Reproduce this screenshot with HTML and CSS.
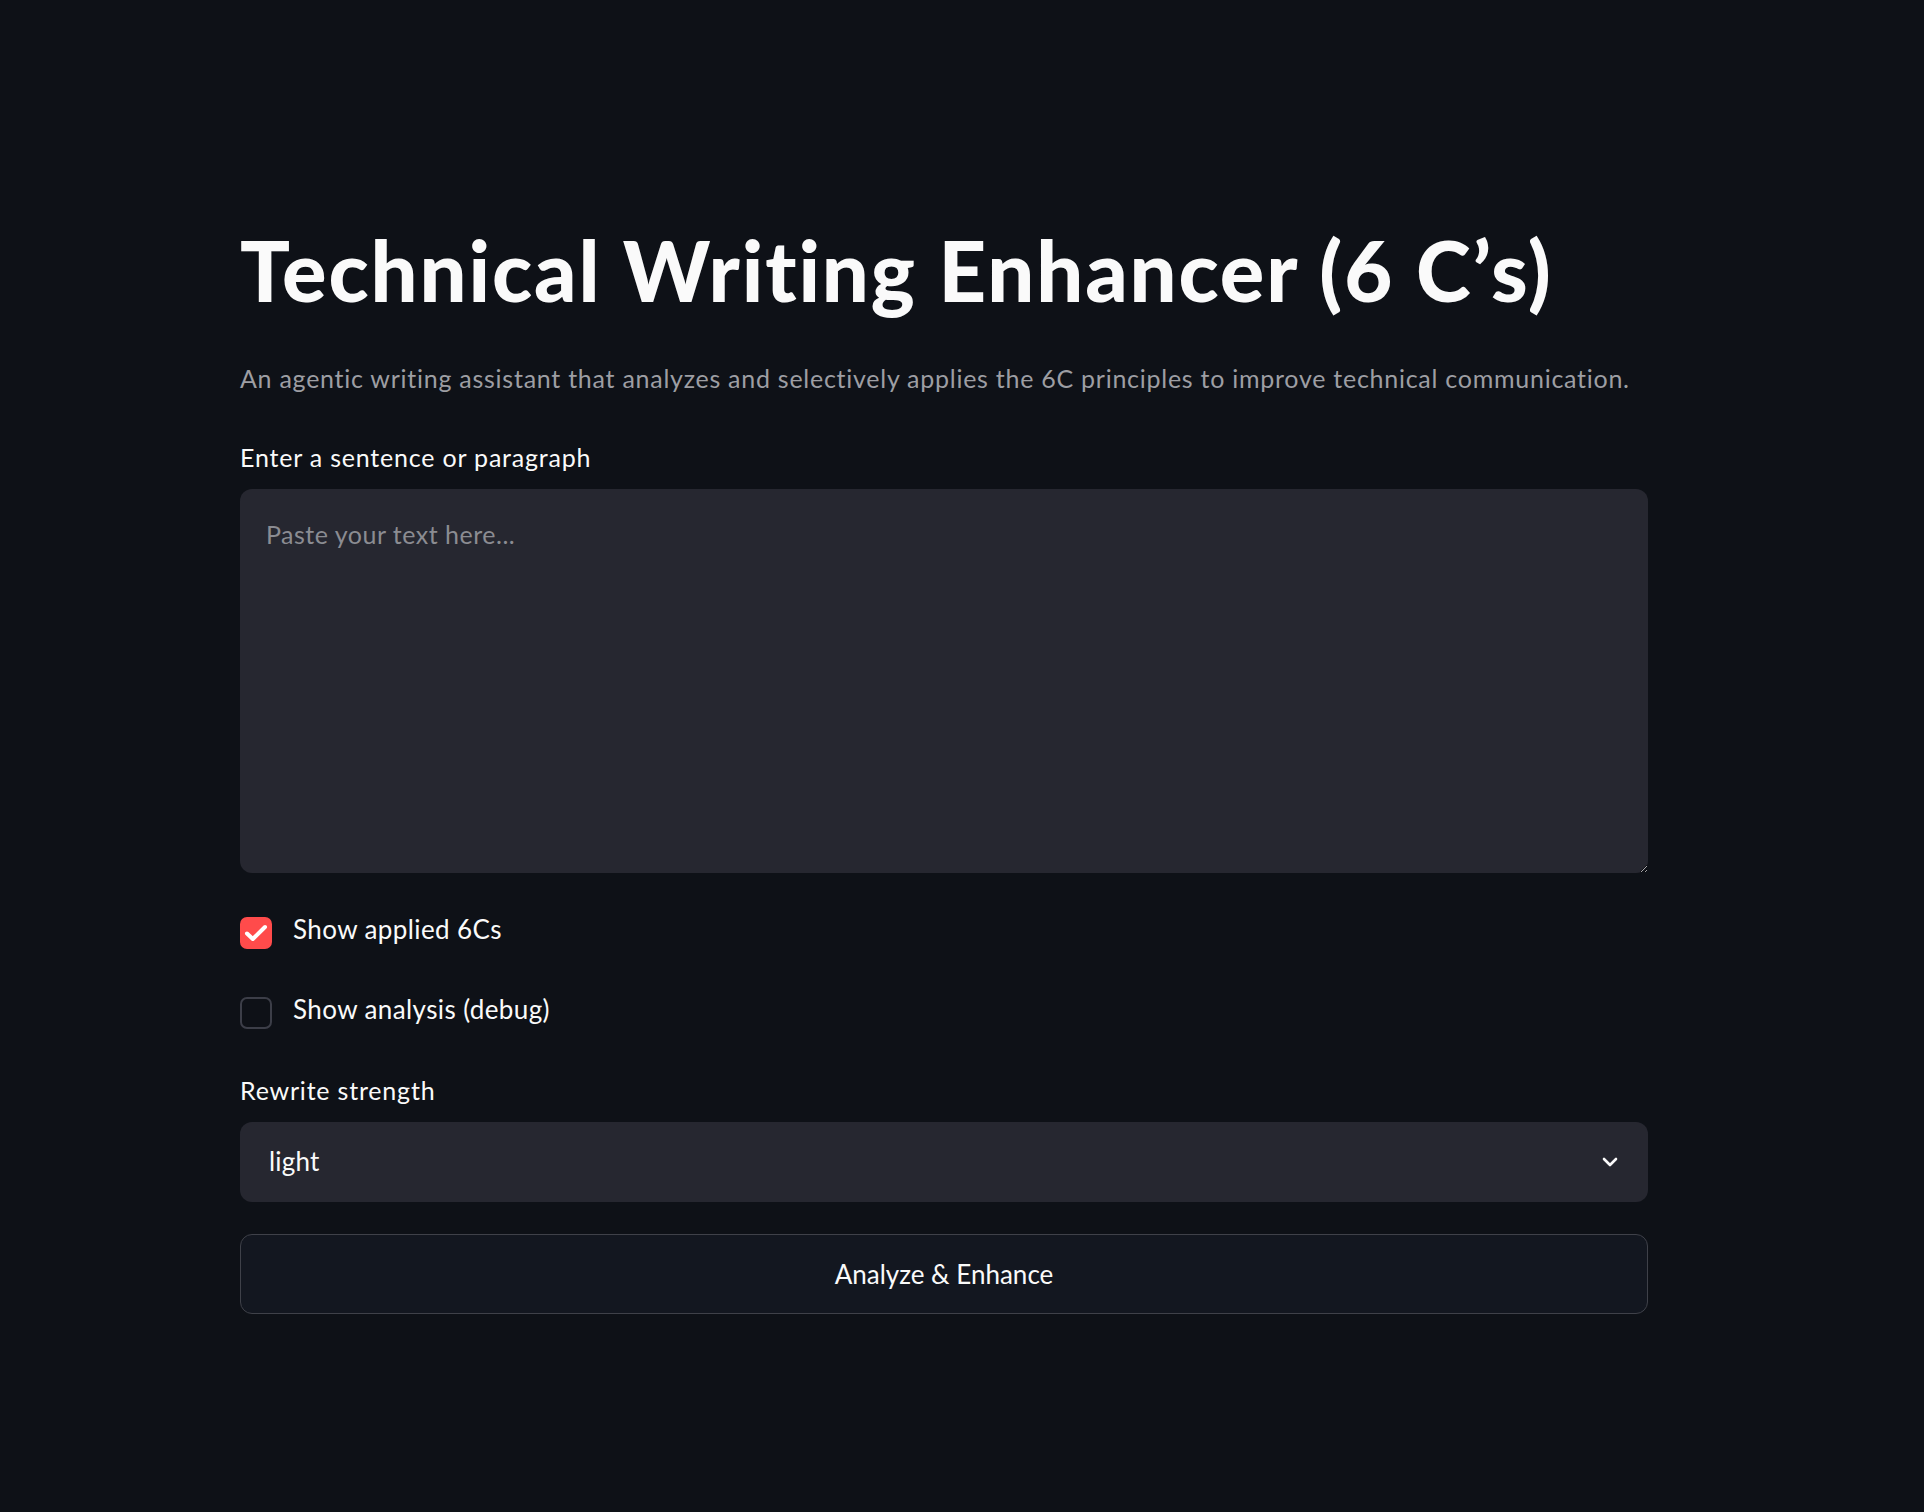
FILE: index.html
```html
<!DOCTYPE html>
<html lang="en">
<head>
<meta charset="utf-8">
<title>Technical Writing Enhancer</title>
<link rel="stylesheet" href="styles.css">
</head>
<body>
<main class="main">
  <h1 class="title">Technical Writing Enhancer (6 C’s)</h1>
  <p class="caption">An agentic writing assistant that analyzes and selectively applies the 6C principles to improve technical communication.</p>

  <label class="field-label" for="txt">Enter a sentence or paragraph</label>
  <textarea id="txt" class="textarea" placeholder="Paste your text here..."></textarea>

  <div class="checks">
    <div class="check-row">
      <span class="box checked">
        <svg width="32" height="32" viewBox="0 0 32 32"><polyline points="7,16.5 12.8,22 25,10" fill="none" stroke="#fff" stroke-width="4" stroke-linecap="round" stroke-linejoin="round"/></svg>
      </span>
      <span class="check-label">Show applied 6Cs</span>
    </div>
    <div class="check-row">
      <span class="box"></span>
      <span class="check-label">Show analysis (debug)</span>
    </div>
  </div>

  <div class="field-label">Rewrite strength</div>
  <div class="select">
    <span class="select-value">light</span>
    <svg class="chev" width="18" height="12" viewBox="0 0 18 12"><polyline points="3,3 9,9 15,3" fill="none" stroke="#fafafa" stroke-width="2.6" stroke-linecap="round" stroke-linejoin="round"/></svg>
  </div>

  <button class="btn">Analyze &amp; Enhance</button>
</main>
</body>
</html>
```

FILE: styles.css
```css
html, body {
  margin: 0;
  padding: 0;
  background: #0e1117;
  color-scheme: dark;
}

body {
  font-family: Lato, "Noto Sans", "Liberation Sans", sans-serif;
  color: #fafafa;
  min-height: 1512px;
}

.main {
  width: 1408px;
  margin-left: 240px;
  padding-top: 221px;
  display: flex;
  flex-direction: column;
}

.title {
  margin: 0;
  font-size: 83px;
  line-height: 98px;
  font-weight: 900;
  letter-spacing: 1.9px;
  color: #fafafa;
}

.caption {
  margin: 39px 0 0;
  font-size: 25px;
  line-height: 40px;
  color: #9d9ea3;
  letter-spacing: 0.74px;
}

.field-label {
  display: block;
  margin-top: 43px;
  font-size: 25px;
  line-height: 32px;
  color: #fafafa;
  letter-spacing: 0.8px;
}

.textarea {
  margin-top: 16px;
  box-sizing: border-box;
  width: 1408px;
  height: 384px;
  border: none;
  outline: none;
  border-radius: 12px;
  background: #262730;
  padding: 27px 26px;
  font-family: inherit;
  font-size: 25px;
  line-height: 36px;
  letter-spacing: 0.5px;
  color: #fafafa;
  resize: vertical;
}

.textarea::placeholder {
  color: #8b8c92;
}

.checks {
  margin-top: 36px;
  display: flex;
  flex-direction: column;
  gap: 40px;
}

.check-row {
  display: flex;
  align-items: flex-start;
  height: 40px;
}

.box {
  box-sizing: border-box;
  width: 32px;
  height: 32px;
  margin-top: 8px;
  border-radius: 7px;
  border: 2px solid #3c3e48;
  display: flex;
  align-items: center;
  justify-content: center;
  flex: none;
}

.box.checked {
  background: #ff4b4b;
  border: none;
}

.check-label {
  margin-left: 21px;
  font-size: 26px;
  line-height: 40px;
  color: #fafafa;
  letter-spacing: 0.4px;
}

.checks + .field-label {
  margin-top: 45px;
}

.select {
  margin-top: 16px;
  box-sizing: border-box;
  height: 80px;
  border-radius: 12px;
  background: #262730;
  display: flex;
  align-items: center;
  justify-content: space-between;
  padding: 0 29px 0 29px;
}

.select-value {
  font-size: 26px;
  color: #fafafa;
  margin-top: -2px;
  letter-spacing: 0.2px;
}

.chev {
  display: block;
}

.btn {
  margin-top: 32px;
  box-sizing: border-box;
  width: 1408px;
  height: 80px;
  border-radius: 12px;
  border: 1.5px solid #3f4149;
  background: #131720;
  color: #fafafa;
  font-family: inherit;
  font-size: 26px;
  letter-spacing: 0;
}
```
